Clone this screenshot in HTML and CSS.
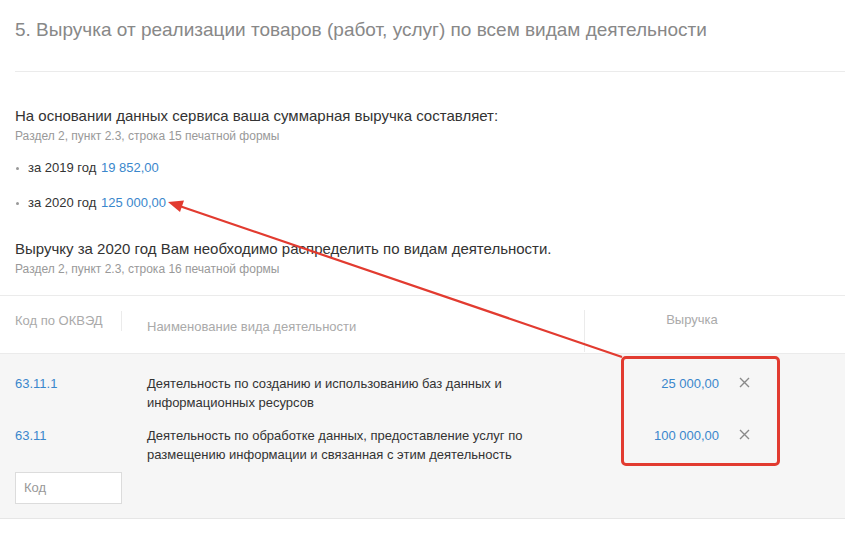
FILE: index.html
```html
<!DOCTYPE html>
<html lang="ru">
<head>
<meta charset="utf-8">
<link rel="stylesheet" href="styles.css">
</head>
<body>
<div class="page">
  <h1 class="title">5. Выручка от реализации товаров (работ, услуг) по всем видам деятельности</h1>
  <div class="divider"></div>

  <section class="summary">
    <p class="lead">На основании данных сервиса ваша суммарная выручка составляет:</p>
    <p class="note">Раздел 2, пункт 2.3, строка 15 печатной формы</p>
    <ul class="years">
      <li>за 2019 год <span class="num">19 852,00</span></li>
      <li>за 2020 год <span class="num">125 000,00</span></li>
    </ul>
    <p class="lead lead2">Выручку за 2020 год Вам необходимо распределить по видам деятельности.</p>
    <p class="note">Раздел 2, пункт 2.3, строка 16 печатной формы</p>
  </section>

  <div class="thead">
    <div class="th-code">Код по ОКВЭД</div>
    <div class="th-name">Наименование вида деятельности</div>
    <div class="th-rev">Выручка</div>
  </div>

  <div class="tbody">
    <div class="row">
      <div class="c-code">63.11.1</div>
      <div class="c-name">Деятельность по созданию и использованию баз данных и информационных ресурсов</div>
      <div class="c-amount">25 000,00</div>
      <div class="c-del">
        <svg width="11" height="11" viewBox="0 0 11 11"><path d="M1 1L10 10M10 1L1 10" stroke="#8a8a8a" stroke-width="1.4" fill="none"/></svg>
      </div>
    </div>
    <div class="row">
      <div class="c-code">63.11</div>
      <div class="c-name">Деятельность по обработке данных, предоставление услуг по размещению информации и связанная с этим деятельность</div>
      <div class="c-amount">100 000,00</div>
      <div class="c-del">
        <svg width="11" height="11" viewBox="0 0 11 11"><path d="M1 1L10 10M10 1L1 10" stroke="#8a8a8a" stroke-width="1.4" fill="none"/></svg>
      </div>
    </div>
    <div class="add-row">
      <div class="code-input">Код</div>
    </div>
  </div>

  <div class="highlight"></div>
  <svg class="arrow" width="845" height="550" viewBox="0 0 845 550">
    <line x1="622" y1="357" x2="178" y2="205.5" stroke="#e23b30" stroke-width="2.2"/>
    <polygon points="168,202 184,200.5 180,212" fill="#e23b30"/>
  </svg>
</div>
</body>
</html>
```

FILE: styles.css
```css
* { box-sizing: border-box; }
html, body {
  margin: 0;
  padding: 0;
  background: #fff;
}
body {
  font-family: "Liberation Sans", Arial, sans-serif;
  color: #333;
  width: 845px;
  height: 550px;
  overflow: hidden;
}
.page {
  position: relative;
  width: 845px;
  height: 550px;
}
.title {
  margin: 0;
  padding: 18px 15px 29px;
  font-size: 19px;
  line-height: 24px;
  font-weight: normal;
  color: #888;
  white-space: nowrap;
}
.divider {
  margin-left: 15px;
  border-top: 1px solid #ebebeb;
}
.summary {
  padding: 34px 15px 18px;
}
.lead {
  margin: 0;
  font-size: 15px;
  line-height: 20px;
  color: #333;
}
.lead2 {
  margin-top: 26px;
}
.note {
  margin: 2px 0 0;
  font-size: 12px;
  line-height: 16px;
  color: #999;
}
.years {
  list-style: none;
  margin: 14px 0 0;
  padding: 0;
}
.years li {
  position: relative;
  padding-left: 13px;
  font-size: 13px;
  line-height: 20px;
  color: #333;
}
.years li + li {
  margin-top: 15px;
}
.years li::before {
  content: "";
  position: absolute;
  left: 1px;
  top: 9px;
  width: 3px;
  height: 3px;
  border-radius: 50%;
  background: #999;
}
.num {
  color: #3a87cc;
  margin-left: 1px;
}
.thead {
  display: flex;
  align-items: flex-start;
  height: 59px;
  border-top: 1px solid #ebebeb;
  border-bottom: 1px solid #ebebeb;
  padding: 15px 0 0 15px;
  font-size: 13px;
  line-height: 20px;
  color: #aaa;
}
.th-code {
  width: 107px;
  border-right: 1px solid #ebebeb;
}
.th-name {
  margin-left: 25px;
  margin-top: 6px;
  width: 437px;
}
.th-rev {
  width: 215px;
  height: 42px;
  border-left: 1px solid #ebebeb;
  text-align: center;
  margin-top: -1px;
}
.tbody {
  background: #f6f6f6;
  border-bottom: 1px solid #e6e6e6;
  padding: 20px 0 14px 15px;
}
.row {
  display: flex;
  align-items: flex-start;
  font-size: 13px;
  line-height: 19px;
}
.row + .row {
  margin-top: 14px;
}
.c-code {
  width: 132px;
  color: #3a87cc;
}
.c-name {
  width: 400px;
  color: #333;
}
.c-amount {
  width: 172px;
  text-align: right;
  color: #3a87cc;
}
.c-del {
  width: 50px;
  padding-left: 20px;
  padding-top: 3px;
  line-height: 0;
}
.add-row {
  margin-top: 8px;
}
.code-input {
  width: 107px;
  height: 32px;
  background: #fff;
  border: 1px solid #dcdcdc;
  padding: 0 0 0 8px;
  font-size: 13px;
  line-height: 30px;
  color: #999;
}
.highlight {
  position: absolute;
  left: 621px;
  top: 356px;
  width: 159px;
  height: 110px;
  border: 3px solid #e23b30;
  border-radius: 5px;
}
.arrow {
  position: absolute;
  left: 0;
  top: 0;
  pointer-events: none;
}
```
